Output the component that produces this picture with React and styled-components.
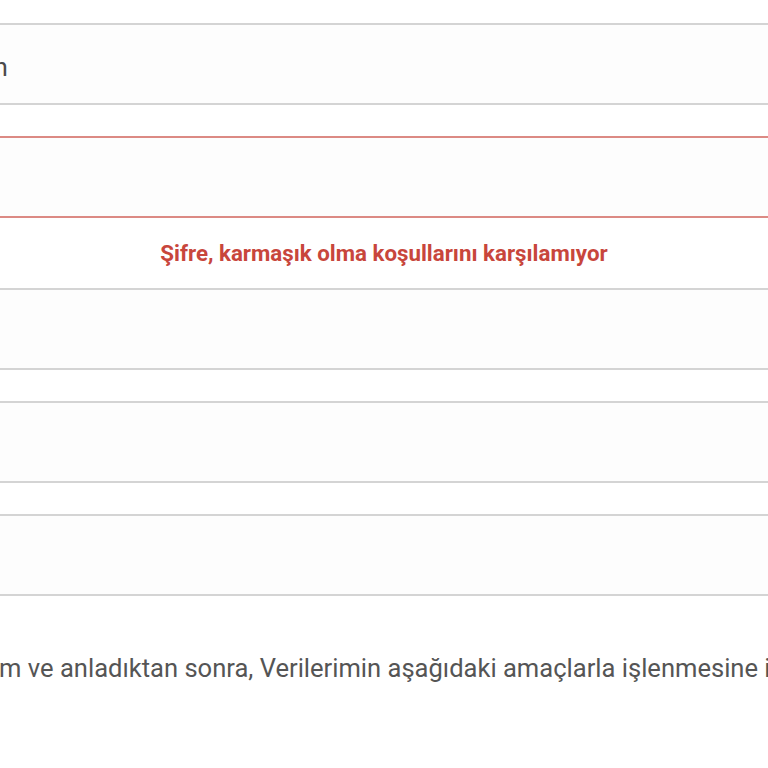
import React from "react";
import styled, { createGlobalStyle } from "styled-components";

const Global = createGlobalStyle`
  html, body { margin: 0; padding: 0; background: #ffffff; overflow: hidden; }
  body { font-family: Roboto, "Noto Sans", "Liberation Sans", sans-serif; }
`;

const Viewport = styled.div`
  width: 768px;
  height: 768px;
  overflow: hidden;
`;

const Form = styled.form`
  width: 1100px;
  margin-left: -166px;
  padding-top: 23px;
  display: flex;
  flex-direction: column;
`;

const Field = styled.div`
  box-sizing: border-box;
  height: 82px;
  margin-bottom: ${(p) => (p.$error ? 0 : 31)}px;
  border-top: 2px solid ${(p) => (p.$error ? "#dc8a84" : "#d4d4d4")};
  border-bottom: 2px solid ${(p) => (p.$error ? "#dc8a84" : "#d4d4d4")};
  background: #fdfdfd;
  display: flex;
  align-items: center;
  padding: 6px 0 0 82px;
  font-size: 26px;
  color: #4a4a4a;
`;

const ErrorRow = styled.div`
  height: 70px;
  display: flex;
  align-items: center;
  justify-content: center;
  font-size: 22.3px;
  font-weight: 700;
  color: #c8463c;
`;

const Consent = styled.p`
  margin: 23px 0 0;
  font-size: 25.55px;
  line-height: 36px;
  color: #555555;
  white-space: nowrap;
  text-indent: 92px;
`;

export default function App() {
  return (
    <Viewport>
      <Global />
      <Form>
        <Field>Soyadın</Field>
        <Field $error />
        <ErrorRow>Şifre, karmaşık olma koşullarını karşılamıyor</ErrorRow>
        <Field />
        <Field />
        <Field />
        <Consent>
          Okudum ve anladıktan sonra, Verilerimin aşağıdaki amaçlarla işlenmesine izin veriyorum.
        </Consent>
      </Form>
    </Viewport>
  );
}
